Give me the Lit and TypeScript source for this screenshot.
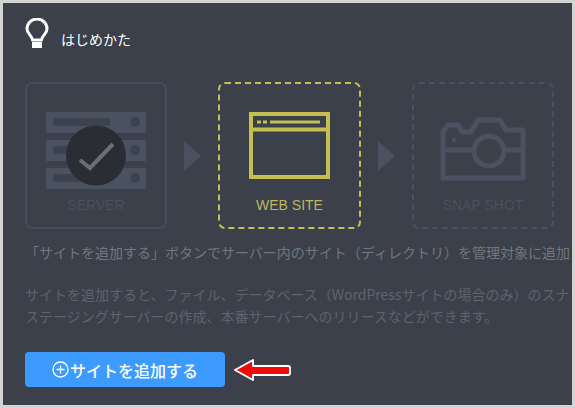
import { LitElement, html, css, svg } from "lit";
import { customElement } from "lit/decorators.js";

const CJK = `"Noto Sans CJK JP", "Liberation Sans", sans-serif`;

@customElement("app-root")
export class AppRoot extends LitElement {
  static styles = css`
    :host { display: block; width: 575px; height: 408px; box-sizing: border-box; padding: 3px; background: #d3d4d2; overflow: hidden; }
    .panel { box-sizing: border-box; width: 569px; height: 402px; padding: 15px 0 0 22px; background: #3b404b; overflow: hidden; font-family: "Noto Sans CJK JP", "Liberation Sans", sans-serif; }
    .header { display: flex; align-items: center; height: 30px; margin-bottom: 34px; color: #fff; font-size: 14px; }
    .header svg { display: block; margin-right: 12px; }
    .header span { position: relative; top: 6px; }
    .steps { display: flex; align-items: stretch; height: 147px; }
    .card { box-sizing: border-box; width: 142px; border-radius: 7px; padding-top: 28px; display: flex; flex-direction: column; align-items: center; }
    .card.done { border: 2px solid #464c59; }
    .card.active { width: 143px; border: 2px dashed #c5bf52; color: #c5bf52; }
    .card.todo { border: 2px dashed #4a505d; }
    .icon { height: 80px; display: block; flex: none; }
    .label { font-family: "Liberation Sans", sans-serif; font-size: 14px; line-height: 26px; color: #4a505d; }
    .active .label { color: #bdb75a; }
    .arrow { width: 51px; flex: none; display: flex; align-items: center; justify-content: center; }
    .arrow svg { display: block; }
    .lead, .sub { white-space: nowrap; font-size: 14px; line-height: 22px; }
    .lead { margin-top: 12px; color: #72767e; }
    .sub { margin-top: 20px; color: #5f636d; }
    .action { display: flex; align-items: center; margin-top: 25px; gap: 8px; }
    .btn { box-sizing: border-box; width: 200px; height: 35px; border: 0; border-radius: 4px; background: #3d9bff; color: #fff; font-family: inherit; font-size: 16px; font-weight: 500; display: flex; align-items: center; justify-content: center; padding: 0; gap: 1px; }
    .btn svg { display: block; }
  `;

  private tri() {
    return html`<div class="arrow"><svg width="17" height="30" viewBox="0 0 17 30"><path d="M0 0L17 15L0 30Z" fill="#4a5160"/></svg></div>`;
  }

  render() {
    const c = "#4a5160";
    return html`<div class="panel">
      <div class="header">
        <svg width="24" height="30" viewBox="0 0 24 30" fill="none">
          <path d="M7.5 22C7.5 18 2 16 2 11A10 10 0 0 1 22 11C22 16 16.5 18 16.5 22Z" stroke="#fff" stroke-width="3" stroke-linejoin="round"/>
          <rect x="7" y="24" width="10" height="6" fill="#fff"/>
        </svg>
        <span>はじめかた</span>
      </div>
      <div class="steps">
        <div class="card done">
          <svg class="icon" width="100" height="80" viewBox="0 0 100 80">
            ${[0, 28, 56].map((y) => svg`
              <rect x="0" y="${y}" width="100" height="21" fill="${c}"/>
              <rect x="7" y="${y + 6}" width="57" height="8" rx="3" fill="#3d434e"/>
              <circle cx="89" cy="${y + 10}" r="5" fill="#3d434e"/>`)}
            <circle cx="50" cy="43.5" r="30" fill="#2a2d34"/>
            <path d="M34 48L44 56L67 32" fill="none" stroke="#6c6e73" stroke-width="4"/>
          </svg>
          <div class="label">SERVER</div>
        </div>
        ${this.tri()}
        <div class="card active">
          <svg class="icon" width="81" height="80" viewBox="0 0 81 80" fill="none" stroke="#c5bf52">
            <rect x="2" y="2" width="77" height="63" stroke-width="4"/>
            <path d="M2 17.5H79" stroke-width="4"/>
            <path d="M8 10H12M14 10H18M21 10H71" stroke-width="3"/>
          </svg>
          <div class="label">WEB SITE</div>
        </div>
        ${this.tri()}
        <div class="card todo">
          <svg class="icon" width="86" height="80" viewBox="0 0 86 80" fill="none" stroke="${c}" stroke-width="5">
            <path d="M3 66H83V18H66L60 8H38L31 20H22L18 13H8L3 20Z" stroke-linejoin="round"/>
            <circle cx="49" cy="39" r="15"/>
            <path d="M3 38H34M64 38H83" />
            <circle cx="14" cy="28" r="2" fill="${c}" stroke="none"/>
          </svg>
          <div class="label">SNAP SHOT</div>
        </div>
      </div>
      <div class="lead">「サイトを追加する」ボタンでサーバー内のサイト（ディレクトリ）を管理対象に追加します。</div>
      <div class="sub">サイトを追加すると、ファイル、データベース（WordPressサイトの場合のみ）のスナップショットの作成、<br>ステージングサーバーの作成、本番サーバーへのリリースなどができます。</div>
      <div class="action">
        <button class="btn">
          <svg width="17" height="17" viewBox="0 0 17 17" fill="none" stroke="#fff" stroke-width="1.3">
            <circle cx="8.5" cy="8.5" r="7.5"/><path d="M8.5 4.5V12.5M4.5 8.5H12.5"/>
          </svg>
          <span>サイトを追加する</span>
        </button>
        <svg width="58" height="24" viewBox="0 0 58 24">
          <path d="M2 12L20 2V8H55Q57 8 57 10V15Q57 17 55 17H20V22Z" fill="#f00a0a" stroke="#fff" stroke-width="2" stroke-linejoin="round"/>
        </svg>
      </div>
    </div>`;
  }
}
